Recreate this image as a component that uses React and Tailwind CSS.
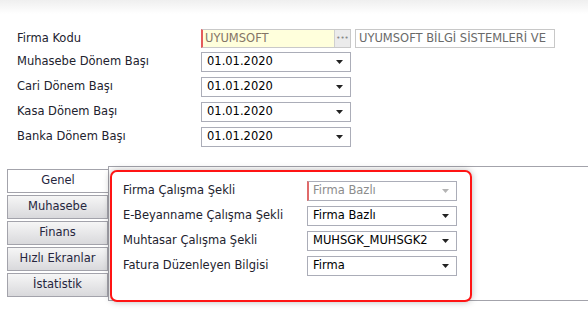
import React from "react";

const Arrow = ({ color = "#333" }) => (
  <svg width="7" height="4" viewBox="0 0 7 4" className="shrink-0">
    <path d="M0 0 L7 0 L3.5 4 Z" fill={color} />
  </svg>
);

const Select = ({ value, disabled }) => (
  <div
    className={
      "flex h-[20px] w-[150px] items-center justify-between border border-[#abadb8] bg-white pr-[7px] " +
      (disabled ? "border-l-2 border-l-[#e06a6a] pl-[4px] text-[#8c8c8c]" : "pl-[5px] text-black")
    }
  >
    <span className="leading-none">{value}</span>
    <Arrow color={disabled ? "#b4b4b4" : "#222"} />
  </div>
);

const Row = ({ label, children, className = "" }) => (
  <div className={"flex items-center " + className}>
    <div className="w-[184px] text-[#22222e]">{label}</div>
    {children}
  </div>
);

const Tab = ({ label, active }) => (
  <div
    className={
      "flex h-[24px] items-center justify-center border border-[#a3a3ab] text-[#26263e] " +
      (active ? "bg-white border-r-0" : "bg-gradient-to-b from-[#f6f6f6] to-[#d9d9dc]")
    }
  >
    {label}
  </div>
);

export default function App() {
  return (
    <div
      className="relative h-[336px] w-[588px] overflow-hidden bg-white text-[11.5px]"
      style={{ fontFamily: '"DejaVu Sans", Verdana, sans-serif' }}
    >
      <div className="h-[14px] bg-gradient-to-b from-[#efefef] to-white" />

      <div className="flex flex-col pl-[17px] pt-[15px]">
        <Row label="Firma Kodu">
          <div className="flex h-[19px] w-[150px] border border-[#c9c9c9] border-l-2 border-l-[#e45c5c] bg-[#ffffdc]">
            <div className="flex flex-1 items-center pl-[2px] text-[#847466]">UYUMSOFT</div>
            <div className="flex w-[16px] items-center justify-center border-l border-[#d0d0d0] bg-[#ebebeb] text-[7px] leading-none text-[#888]">
              •••
            </div>
          </div>
          <div className="ml-[4px] flex h-[19px] w-[200px] items-center overflow-hidden whitespace-nowrap border border-[#c8c8c8] bg-white pl-[3px] text-[#6a6a6a]">
            UYUMSOFT BİLGİ SİSTEMLERİ VE
          </div>
        </Row>
        <Row label="Muhasebe Dönem Başı" className="mt-[4px]">
          <Select value="01.01.2020" />
        </Row>
        <Row label="Cari Dönem Başı" className="mt-[5px]">
          <Select value="01.01.2020" />
        </Row>
        <Row label="Kasa Dönem Başı" className="mt-[5px]">
          <Select value="01.01.2020" />
        </Row>
        <Row label="Banka Dönem Başı" className="mt-[5px]">
          <Select value="01.01.2020" />
        </Row>
      </div>

      <div className="mt-[19px] flex pl-[7px]">
        <div className="mt-[3px] flex w-[101px] flex-col gap-[2px]">
          <Tab label="Genel" active />
          <Tab label="Muhasebe" />
          <Tab label="Finans" />
          <Tab label="Hızlı Ekranlar" />
          <Tab label="İstatistik" />
        </div>
        <div className="h-[135px] flex-1 border-y border-l border-[#a3a3ab]">
          <div className="ml-[1px] mt-[3px] h-[132px] w-[362px] rounded-[7px] border-2 border-[#ff1414] bg-white pl-[11px] pt-[9px] shadow-[0_0_7px_rgba(0,0,0,0.28)]">
            <Row label="Firma Çalışma Şekli">
              <Select value="Firma Bazlı" disabled />
            </Row>
            <Row label="E-Beyanname Çalışma Şekli" className="mt-[5px]">
              <Select value="Firma Bazlı" />
            </Row>
            <Row label="Muhtasar Çalışma Şekli" className="mt-[5px]">
              <Select value="MUHSGK_MUHSGK2" />
            </Row>
            <Row label="Fatura Düzenleyen Bilgisi" className="mt-[5px]">
              <Select value="Firma" />
            </Row>
          </div>
        </div>
      </div>
    </div>
  );
}
